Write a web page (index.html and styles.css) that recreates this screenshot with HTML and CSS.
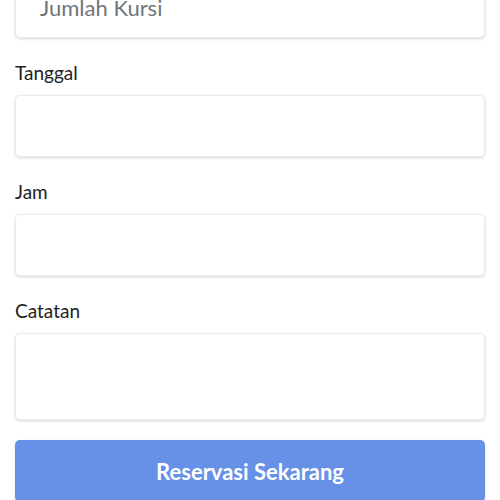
FILE: index.html
```html
<!DOCTYPE html>
<html lang="id">
<head>
<meta charset="utf-8">
<link rel="stylesheet" href="styles.css">
</head>
<body>
<form class="form">
  <input class="field first" type="text" placeholder="Jumlah Kursi">
  <label class="label">Tanggal</label>
  <input class="field" type="text">
  <label class="label">Jam</label>
  <input class="field" type="text">
  <label class="label">Catatan</label>
  <textarea class="field area"></textarea>
  <button class="btn" type="button">Reservasi Sekarang</button>
</form>
</body>
</html>
```
FILE: styles.css
```css
html, body {
  margin: 0;
  padding: 0;
  background: #fff;
  overflow: hidden;
}
.form {
  display: flex;
  flex-direction: column;
  padding: 0 15px;
  margin-top: -24px;
  font-family: Lato, "Noto Sans", sans-serif;
}
.field {
  box-sizing: border-box;
  height: 62px;
  width: 100%;
  border: 1px solid #ececec;
  border-radius: 5px;
  box-shadow: 0 1px 3px rgba(0,0,0,0.16);
  background: #fff;
  padding: 0 24px;
  font-family: Lato, "Noto Sans", sans-serif;
  font-size: 22px;
  color: #333;
  outline: none;
}
.field::placeholder {
  color: #6f757c;
}
.area {
  height: 87px;
  resize: none;
  padding: 10px 24px;
}
.label {
  font-size: 19px;
  line-height: 27px;
  color: #222;
  margin: 21px 0 9px;
}
.btn {
  margin-top: 20px;
  height: 62px;
  border: none;
  border-radius: 5px;
  background: #6691e6;
  color: #fff;
  font-family: Lato, "Noto Sans", sans-serif;
  font-weight: 700;
  font-size: 22px;
  box-shadow: 0 1px 3px rgba(0,0,0,0.12);
}
```
